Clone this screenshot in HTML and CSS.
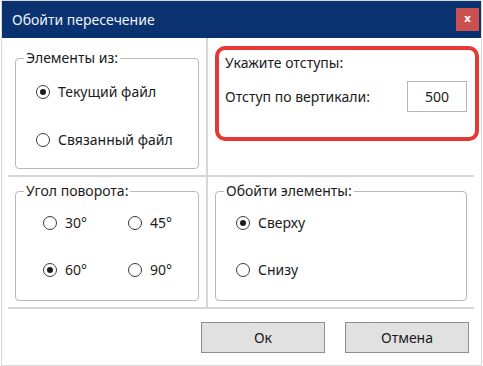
FILE: index.html
```html
<!DOCTYPE html>
<html lang="ru">
<head>
<meta charset="utf-8">
<title>Обойти пересечение</title>
<link rel="stylesheet" href="styles.css">
</head>
<body>
<div class="window">
  <div class="titlebar">
    <span class="title">Обойти пересечение</span>
    <span class="close">x</span>
  </div>
  <div class="panes">
    <div class="cell cell-tl">
      <fieldset class="group group-source">
        <legend>Элементы из:</legend>
        <div class="radios">
          <label class="radio"><span class="dot checked"></span>Текущий файл</label>
          <label class="radio"><span class="dot"></span>Связанный файл</label>
        </div>
      </fieldset>
    </div>
    <div class="cell cell-tr">
      <div class="highlight">
        <div class="caption">Укажите отступы:</div>
        <div class="field-row">
          <span>Отступ по вертикали:</span>
          <span class="input">500</span>
        </div>
      </div>
    </div>
    <div class="cell cell-bl">
      <fieldset class="group group-angle">
        <legend>Угол поворота:</legend>
        <div class="angle-grid">
          <label class="radio"><span class="dot"></span>30°</label>
          <label class="radio"><span class="dot"></span>45°</label>
          <label class="radio"><span class="dot checked"></span>60°</label>
          <label class="radio"><span class="dot"></span>90°</label>
        </div>
      </fieldset>
    </div>
    <div class="cell cell-br">
      <fieldset class="group group-dir">
        <legend>Обойти элементы:</legend>
        <div class="radios radios-dir">
          <label class="radio"><span class="dot checked"></span>Сверху</label>
          <label class="radio"><span class="dot"></span>Снизу</label>
        </div>
      </fieldset>
    </div>
  </div>
  <div class="buttons">
    <button class="btn">Ок</button>
    <button class="btn">Отмена</button>
  </div>
</div>
</body>
</html>
```

FILE: styles.css
```css
* { box-sizing: border-box; }
html, body { margin: 0; padding: 0; background: #ffffff; }
body {
  font-family: "Noto Sans", "Open Sans", sans-serif;
  font-size: 14px;
  color: #1b1b1b;
}
.window {
  margin-left: 1px;
  width: 481px;
  height: 366px;
  border: 1px solid #d9d9d9;
  background: #fff;
}
.titlebar {
  height: 37px;
  background: #0a3170;
  display: flex;
  align-items: center;
  justify-content: space-between;
  padding-left: 10px;
  padding-right: 2px;
}
.title {
  color: #eef2f7;
  font-size: 14px;
}
.close {
  width: 23px;
  height: 23px;
  background: #c9504f;
  color: #fff;
  font-family: "DejaVu Sans", sans-serif;
  font-weight: bold;
  font-size: 11px;
  display: flex;
  align-items: center;
  justify-content: center;
  padding-bottom: 2px;
}
.panes {
  margin-left: 6px;
  width: 466px;
  display: grid;
  grid-template-columns: 198px 266px;
  grid-template-rows: 137px 130px;
  gap: 2px;
  background: #d6d6d6;
  border-bottom: 2px solid #d6d6d6;
}
.cell { background: #fff; padding-left: 7px; }
.cell-tl { padding-top: 10px; }
.cell-bl, .cell-br { padding-top: 4px; }
.cell-tr { padding-top: 8px; }
.group {
  margin: 0;
  border: 1px solid #b9b9b9;
  border-radius: 4px;
  padding: 0;
  min-width: 0;
}
.group legend {
  margin-left: 8px;
  padding: 0 2px;
  line-height: 20px;
  font-size: 14px;
  color: #1b1b1b;
}
.group-source { width: 184px; }
.group-angle { width: 184px; }
.group-dir { width: 252px; }
.radios {
  display: flex;
  flex-direction: column;
  gap: 24px;
  padding: 12px 0 16px 20px;
}
.radios-dir { gap: 23px; padding: 10px 0 18px 20px; }
.radio {
  display: flex;
  align-items: center;
  gap: 8px;
  height: 24px;
  line-height: 24px;
}
.dot {
  width: 14px;
  height: 14px;
  border: 1px solid #3a3a3a;
  border-radius: 50%;
  background: #fff;
  display: flex;
  align-items: center;
  justify-content: center;
  flex: none;
}
.dot.checked::after {
  content: "";
  width: 6px;
  height: 6px;
  border-radius: 50%;
  background: #1b1b1b;
}
.angle-grid {
  display: grid;
  grid-template-columns: 85px 85px;
  row-gap: 23px;
  padding: 10px 0 18px 27px;
}
.highlight {
  width: 264px;
  height: 95px;
  border: 4px solid #e53935;
  border-radius: 10px;
  padding: 3px 8px 0 6px;
}
.caption { line-height: 20px; }
.field-row {
  margin-top: 8px;
  display: flex;
  align-items: center;
  justify-content: space-between;
  padding-right: 0;
}
.input {
  width: 60px;
  height: 31px;
  border: 1px solid #b5b5b5;
  display: flex;
  align-items: center;
  justify-content: center;
  margin-right: 0;
}
.buttons {
  display: flex;
  justify-content: flex-end;
  gap: 20px;
  padding-top: 13px;
  padding-right: 12px;
}
.btn {
  width: 124px;
  height: 31px;
  background: #e1e1e1;
  border: 1px solid #8f8f8f;
  font-family: "Noto Sans", "Open Sans", sans-serif;
  font-size: 14px;
  color: #1b1b1b;
  padding: 0;
}
```
